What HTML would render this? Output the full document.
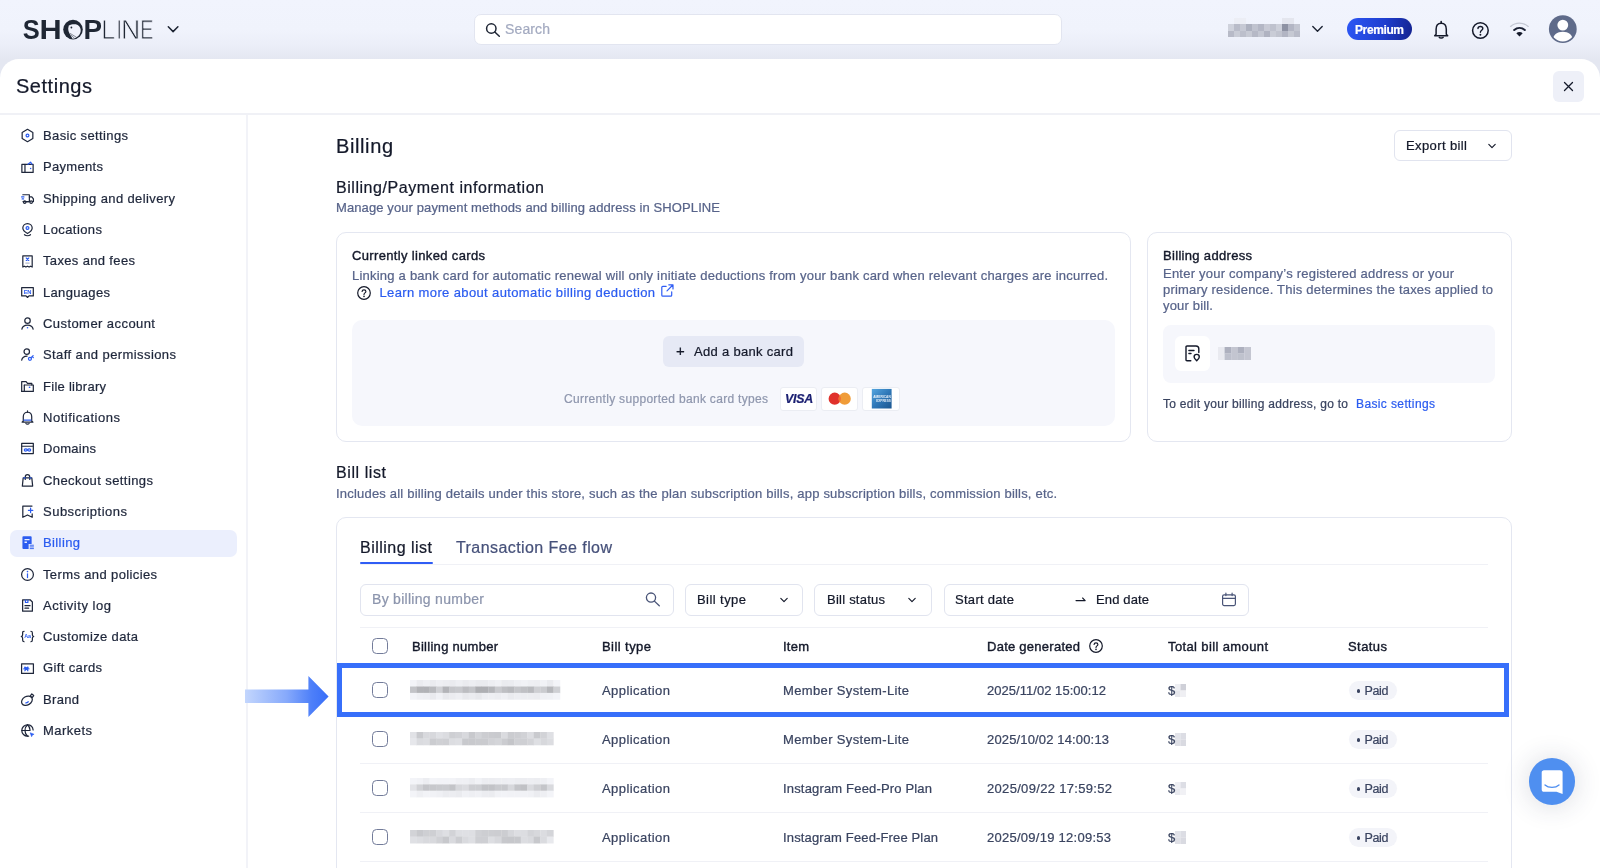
<!DOCTYPE html>
<html lang="en">
<head>
<meta charset="utf-8">
<title>Settings - Billing</title>
<style>
html,body{margin:0;padding:0;}
body{width:1600px;height:868px;overflow:hidden;font-family:"Liberation Sans",sans-serif;background:#eef0f9;}
#app{position:relative;width:1600px;height:868px;overflow:hidden;background:linear-gradient(180deg,#f1f4fd 0px,#f0f3fc 30px,#ebeef8 46px,#e4e7f1 59px);}
#tx{position:absolute;left:0;top:0;width:1600px;height:868px;will-change:transform;}
.t{position:absolute;white-space:pre;-webkit-text-stroke-width:0.22px;}
.b{position:absolute;box-sizing:border-box;}
svg{position:absolute;overflow:visible;}
.ic{fill:none;stroke:#1f273b;stroke-width:1.3;stroke-linecap:round;stroke-linejoin:round;}
.bl{stroke:#2b5cf0;}
.card{border:1px solid #e4e7f1;border-radius:10px;background:#fff;}
.inp{border:1px solid #e1e4ef;border-radius:6px;background:#fff;}
.cb{width:16px;height:16px;border:1.3px solid #737c9a;border-radius:4.500px;background:#fff;}
.pill{background:#f3f4f9;border-radius:10px;}
.hl{height:1px;background:#f0f1f6;}
.px{position:absolute;}
</style>
</head>
<body>
<div id="app">
<div id="tx">
<!-- header -->
<div class="b" style="left:474px;top:13.500px;width:588px;height:31.200px;border:1px solid #e2e5f0;border-radius:7px;background:#fff;"></div>
<div class="b" style="left:1347px;top:18px;width:65px;height:22px;border-radius:11px;background:linear-gradient(100deg,#2d57f5 0%,#1f3fd0 55%,#14238f 100%);"></div>

<!-- settings panel -->
<div class="b" style="left:0;top:58.500px;width:1600px;height:830px;background:#fff;border-radius:19px 19px 0 0;"></div>
<div class="b" style="left:1553px;top:71px;width:31px;height:31px;border-radius:6px;background:#eef0f8;"></div>
<div class="b" style="left:0;top:113.200px;width:1600px;height:1.600px;background:#f0f1f6;"></div>
<div class="b" style="left:246px;top:115px;width:2px;height:760px;background:#f2f3f8;"></div>

<!-- sidebar active -->
<div class="b" style="left:10px;top:529.500px;width:227px;height:27.300px;border-radius:7px;background:#ebeffd;"></div>

<!-- export -->
<div class="b inp" style="left:1394px;top:130px;width:118px;height:31px;"></div>

<!-- card 1 -->
<div class="b card" style="left:336px;top:232px;width:795px;height:210px;"></div>
<div class="b" style="left:352px;top:320px;width:763px;height:106px;border-radius:10px;background:#f6f7fc;"></div>
<div class="b" style="left:662.600px;top:336px;width:141.400px;height:31px;border-radius:6px;background:#e6e9f5;"></div>
<div class="b" style="left:779.700px;top:387.200px;width:37.600px;height:23.400px;border-radius:3px;border:1px solid #ebedf3;background:#fff;"></div>
<div class="b" style="left:821.300px;top:387.200px;width:36.600px;height:23.400px;border-radius:3px;border:1px solid #ebedf3;background:#fff;"></div>
<div class="b" style="left:862.200px;top:387.200px;width:37.500px;height:23.400px;border-radius:3px;border:1px solid #ebedf3;background:#fff;"></div>

<!-- card 2 -->
<div class="b card" style="left:1146.500px;top:232px;width:365.500px;height:210px;"></div>
<div class="b" style="left:1163px;top:324.600px;width:332px;height:58.400px;border-radius:8px;background:#f6f7fc;"></div>
<div class="b" style="left:1175px;top:336px;width:35px;height:35px;border-radius:6px;background:#fff;"></div>

<!-- card 3 -->
<div class="b card" style="left:336px;top:517px;width:1176px;height:380px;"></div>
<div class="b hl" style="left:360px;top:564px;width:1128px;"></div>
<div class="b" style="left:360px;top:562px;width:73px;height:2.400px;background:#2f5df5;border-radius:1px;"></div>
<div class="b inp" style="left:360px;top:584px;width:314px;height:32px;"></div>
<div class="b inp" style="left:685px;top:584px;width:118px;height:32px;"></div>
<div class="b inp" style="left:814px;top:584px;width:118px;height:32px;"></div>
<div class="b inp" style="left:944px;top:584px;width:305px;height:32px;"></div>
<div class="b hl" style="left:360px;top:627px;width:1128px;"></div>
<div class="b hl" style="left:360px;top:763.300px;width:1128px;"></div>
<div class="b hl" style="left:360px;top:812.400px;width:1128px;"></div>
<div class="b hl" style="left:360px;top:861.400px;width:1128px;"></div>

<!-- checkboxes -->
<div class="b cb" style="left:372px;top:638px;"></div>
<div class="b cb" style="left:372px;top:682px;"></div>
<div class="b cb" style="left:372px;top:731px;"></div>
<div class="b cb" style="left:372px;top:780px;"></div>
<div class="b cb" style="left:372px;top:829px;"></div>

<!-- paid pills -->
<div class="b pill" style="left:1348.500px;top:680.6px;width:48.500px;height:19.600px;"></div>
<div class="b pill" style="left:1348.500px;top:729.6px;width:48.500px;height:19.600px;"></div>
<div class="b pill" style="left:1348.500px;top:778.6px;width:48.500px;height:19.600px;"></div>
<div class="b pill" style="left:1348.500px;top:827.6px;width:48.500px;height:19.600px;"></div>

<!-- highlight frame + arrow -->
<div class="b" style="left:336.700px;top:663px;width:1172.800px;height:54px;border:5px solid #376ffa;"></div>
<svg style="left:245px;top:676px;" width="84" height="42" viewBox="0 0 84 42">
<defs><linearGradient id="ag" x1="0" x2="1" y1="0" y2="0"><stop offset="0" stop-color="#c3d6fd"/><stop offset="0.5" stop-color="#86a9fb"/><stop offset="0.8" stop-color="#4d7ff9"/><stop offset="1" stop-color="#386ef8"/></linearGradient></defs>
<path d="M0 13.600H63.400V0.100L83.600 20.600L63.400 41V27.100H0Z" fill="url(#ag)"/>
</svg>

<!-- chat -->
<div class="b" style="left:1528.600px;top:758.200px;width:46.800px;height:46.800px;border-radius:24px;background:#4f8ff0;box-shadow:0 1px 26px 2px rgba(40,50,80,0.15);"></div>
<!-- logo -->
<svg style="left:0;top:0;" width="200" height="58" viewBox="0 0 200 58" font-family="'Liberation Sans',sans-serif" font-size="26.5" fill="#1f2734">
<g font-weight="700">
<text transform="translate(22.63,39.2) scale(0.962,1.075)">S</text>
<text transform="translate(39.41,39.2) scale(1.16,1.075)">H</text>
<text transform="translate(83.41,39.2) scale(1.048,1.075)">P</text>
</g>
<g stroke="#f0f2fb" stroke-width="0.75">
<text transform="translate(101.23,39.2) scale(0.94,1.075)">L</text>
<text transform="translate(116.4,39.2) scale(0.72,1.075)">I</text>
<text transform="translate(121.09,39.2) scale(1.007,1.075)">N</text>
<text transform="translate(140.25,39.2) scale(0.748,1.075)">E</text>
</g>
<circle cx="73" cy="29.600" r="9.800"/>
<path d="M68.800 25.600C71 24.300 73.500 23.900 75.800 24.300C78.600 25.200 80.500 27.200 80.700 29.800C80.900 32.200 80 34.200 78.500 35.800C77 37.400 75 38.500 72.600 38.800L70.200 34.800C69 33 68.200 30.800 68.200 28.600Z" fill="#f0f2fb"/>
<circle cx="71.400" cy="27.500" r="0.900"/>
<path d="M69.800 33.200L76.500 37.300M70.600 34.800L74.500 38.200" stroke="#1f2734" stroke-width="0.5" fill="none"/>
</svg>
<svg style="left:166.500px;top:24px;" width="12" height="10" viewBox="0 0 12 10"><path d="M1.300 2.800L6.100 7.600L10.900 2.800" fill="none" stroke="#1d2433" stroke-width="1.500" stroke-linecap="round" stroke-linejoin="round"/></svg>
<!-- search icon -->
<svg style="left:484px;top:21px;" width="18" height="18" viewBox="0 0 18 18"><circle cx="7.300" cy="7.500" r="4.700" fill="none" stroke="#1d2433" stroke-width="1.500"/><path d="M10.800 11L15.300 15.300" stroke="#1d2433" stroke-width="1.500" stroke-linecap="round"/></svg>
<!-- blurred shop name -->
<svg style="left:1228px;top:18px;" width="72" height="20" viewBox="0 0 72 20">
<rect x="0" y="6" width="72" height="13" fill="#c4c7d2"/>
<rect x="6" y="0" width="12" height="6" fill="#eceef5"/><rect x="54" y="0" width="12" height="6" fill="#e4e6ee"/>
<rect x="0" y="6" width="6" height="7" fill="#cfd2dc"/><rect x="6" y="6" width="6" height="7" fill="#b9bcc9"/><rect x="12" y="6" width="6" height="7" fill="#c6c9d4"/><rect x="18" y="6" width="6" height="7" fill="#adb1bf"/><rect x="24" y="6" width="6" height="7" fill="#c0c3cf"/><rect x="30" y="6" width="6" height="7" fill="#b4b7c5"/><rect x="36" y="6" width="6" height="7" fill="#c8cad5"/><rect x="42" y="6" width="6" height="7" fill="#bfc2ce"/><rect x="48" y="6" width="6" height="7" fill="#cdd0da"/><rect x="54" y="6" width="6" height="7" fill="#8e92a3"/><rect x="60" y="6" width="6" height="7" fill="#b3b6c4"/><rect x="66" y="6" width="6" height="7" fill="#c3c6d1"/>
<rect x="0" y="13" width="6" height="6" fill="#b7bac7"/><rect x="6" y="13" width="6" height="6" fill="#c9ccd6"/><rect x="12" y="13" width="6" height="6" fill="#bcbfcb"/><rect x="18" y="13" width="6" height="6" fill="#c7cad4"/><rect x="24" y="13" width="6" height="6" fill="#b6b9c6"/><rect x="30" y="13" width="6" height="6" fill="#c4c7d2"/><rect x="36" y="13" width="6" height="6" fill="#b0b3c1"/><rect x="42" y="13" width="6" height="6" fill="#c9ccd6"/><rect x="48" y="13" width="6" height="6" fill="#c1c4cf"/><rect x="54" y="13" width="6" height="6" fill="#b2b5c3"/><rect x="60" y="13" width="6" height="6" fill="#c6c9d3"/><rect x="66" y="13" width="6" height="6" fill="#b9bcc9"/>
</svg>
<svg style="left:1311px;top:24px;" width="13" height="10" viewBox="0 0 13 10"><path d="M1.800 2.500L6.500 7.200L11.200 2.500" fill="none" stroke="#1d2433" stroke-width="1.400" stroke-linecap="round" stroke-linejoin="round"/></svg>
<!-- bell -->
<svg style="left:1432px;top:20px;" width="18" height="20" viewBox="0 0 18 20"><path d="M4.100 14.300V9.200C4.100 5.700 6 3.200 9.200 3.200S14.300 5.700 14.300 9.200V14.300L15.700 15.700H2.700Z" fill="none" stroke="#14192a" stroke-width="1.500" stroke-linejoin="round"/><path d="M7.300 17.300C7.800 18.300 10.600 18.300 11.100 17.300" fill="none" stroke="#14192a" stroke-width="1.500" stroke-linecap="round"/><path d="M9.200 1.600V3" stroke="#14192a" stroke-width="1.600" stroke-linecap="round"/></svg>
<!-- help -->
<svg style="left:1471px;top:21px;" width="19" height="19" viewBox="0 0 19 19"><circle cx="9.400" cy="9.500" r="7.800" fill="none" stroke="#14192a" stroke-width="1.500"/><path d="M7 7.600C7 4.800 11.800 4.800 11.800 7.600C11.800 9.300 9.400 9.300 9.400 11.300" fill="none" stroke="#14192a" stroke-width="1.400" stroke-linecap="round"/><circle cx="9.400" cy="13.700" r="0.950" fill="#14192a"/></svg>
<!-- wifi -->
<svg style="left:1509px;top:21px;" width="21" height="17" viewBox="0 0 21 17"><path d="M1.600 5.400C6.600 0.900 14.200 0.900 19.200 5.400" fill="none" stroke="#c3c7d3" stroke-width="1.300" stroke-linecap="round"/><path d="M5.200 9C8.300 6.200 12.700 6.200 15.800 9" fill="none" stroke="#1a2033" stroke-width="2" stroke-linecap="round"/><path d="M7.300 12.200C9.200 10.700 11.800 10.700 13.700 12.200L10.500 15.600Z" fill="#14192a"/></svg>
<!-- avatar -->
<svg style="left:1548px;top:15px;" width="30" height="29" viewBox="0 0 30 29"><defs><clipPath id="avc"><circle cx="14.800" cy="14.100" r="12.300"/></clipPath></defs><circle cx="14.800" cy="14.100" r="13.900" fill="#5f6b8a"/><g clip-path="url(#avc)"><circle cx="14.800" cy="10.100" r="5.400" fill="#fff"/><path d="M4.400 27C4.400 19.500 9.500 16.700 14.800 16.700S25.200 19.500 25.200 27Z" fill="#fff"/></g></svg>
<!-- close x -->
<svg style="left:1563px;top:81px;" width="11" height="11" viewBox="0 0 11 11"><path d="M1.500 1.500L9.500 9.500M9.500 1.500L1.500 9.500" stroke="#14192a" stroke-width="1.300" stroke-linecap="round"/></svg>
<!-- sidebar icons -->
<svg style="left:20.200px;top:128.2px;" width="15" height="15" viewBox="0 0 16 16"><path class="ic" d="M8 1.400L13.700 4.700V11.300L8 14.600L2.300 11.300V4.700Z"/><circle cx="8" cy="8" r="1.500" class="ic bl" stroke-width="1.200"/></svg>
<svg style="left:20.200px;top:159.5px;" width="15" height="15" viewBox="0 0 16 16"><path class="ic" d="M2 4.700H14V13.300H2Z"/><path class="ic" d="M5.300 4.700V13.300"/><path class="ic bl" d="M8.500 4.500L11.300 2.300L12.700 4.500" stroke-width="1.100"/><circle cx="11.300" cy="9" r="0.800" fill="#2b5cf0"/></svg>
<svg style="left:20.200px;top:190.8px;" width="15" height="15" viewBox="0 0 16 16"><path class="ic" d="M3 4H10V11.300H3.200"/><path class="ic" d="M10 6.300H12.600L14.300 8.500V11.300H13.400"/><path class="ic" d="M6.600 11.300H10.300"/><circle class="ic" cx="5" cy="11.900" r="1.300"/><circle class="ic" cx="11.900" cy="11.900" r="1.300"/><path class="ic bl" d="M1.700 6.300H4.200M2.300 8.500H3.800" stroke-width="1.100"/></svg>
<svg style="left:20.200px;top:222.2px;" width="15" height="15" viewBox="0 0 16 16"><path class="ic" d="M8 1.700C10.900 1.700 13 3.900 13 6.500C13 9 10.800 10.800 8 12.300C5.200 10.800 3 9 3 6.500C3 3.900 5.100 1.700 8 1.700Z"/><circle class="ic bl" cx="8" cy="6.400" r="1.500" stroke-width="1.200"/><path class="ic" d="M4.800 13.600C6.500 15 9.500 15 11.200 13.600"/></svg>
<svg style="left:20.200px;top:253.5px;" width="15" height="15" viewBox="0 0 16 16"><path class="ic" d="M3 2H13V13.900L11.300 13L9.700 13.900L8 13L6.300 13.900L4.700 13L3 13.900Z"/><path class="ic bl" d="M6.700 4.300L9.300 6.900M9.300 4.300L6.700 6.900" stroke-width="1"/><path d="M5.800 9.700H10.200" stroke="#9aa3bd" stroke-width="1" fill="none"/></svg>
<svg style="left:20.200px;top:284.8px;" width="15" height="15" viewBox="0 0 16 16"><path class="ic" d="M1.800 2.700H14.200V11.600H9.600L8 13.300L6.400 11.600H1.800Z"/><text x="8" y="9.600" text-anchor="middle" font-family="'Liberation Sans',sans-serif" font-size="6.200" font-weight="700" fill="#2b5cf0" letter-spacing="-0.2">EN</text></svg>
<svg style="left:20.200px;top:316.1px;" width="15" height="15" viewBox="0 0 16 16"><circle class="ic" cx="8" cy="5" r="2.900"/><path class="ic" d="M2 14C2.600 10.800 5 9.700 8 9.700S13.400 10.800 14 14"/><circle cx="8" cy="12.600" r="0.850" fill="#2b5cf0"/></svg>
<svg style="left:20.200px;top:347.4px;" width="15" height="15" viewBox="0 0 16 16"><circle class="ic" cx="7.200" cy="5" r="2.900"/><path class="ic" d="M1.800 14C2.400 10.800 4.600 9.700 7.600 9.700"/><circle class="ic bl" cx="10.600" cy="12.600" r="1.600" stroke-width="1.200"/><path class="ic bl" d="M11.800 11.400L14 9.200M13 10.200L14.200 11.300" stroke-width="1.200"/></svg>
<svg style="left:20.200px;top:378.8px;" width="15" height="15" viewBox="0 0 16 16"><path class="ic" d="M1.800 13.200V2.800H6.500L8 4.700H12.600V6.300"/><path class="ic" d="M4.600 6.400H14.200V13.200H1.800"/><path class="ic" d="M4.600 6.400V13.200"/><circle cx="10.200" cy="8.800" r="0.900" fill="#2b5cf0"/></svg>
<svg style="left:20.200px;top:410.1px;" width="15" height="15" viewBox="0 0 16 16"><path class="ic" d="M3.500 11.700V7.300C3.500 4.300 5.400 2.400 8 2.400S12.500 4.300 12.500 7.300V11.700L13.800 12.900H2.200Z"/><path class="ic" d="M8 1V2.300"/><path class="ic" d="M6.300 14.400C6.900 15.400 9.100 15.400 9.700 14.400"/><path class="ic bl" d="M4.300 10.700H11.700" stroke-width="1.300"/></svg>
<svg style="left:20.200px;top:441.4px;" width="15" height="15" viewBox="0 0 16 16"><path class="ic" d="M1.800 2.500H14.200V13.400H1.800Z"/><path class="ic" d="M1.800 5.600H14.200"/><path class="ic bl" d="M8 9.500C7 8 4.600 8.200 4.600 9.600S7 11.200 8 9.500C9 8 11.400 8.200 11.400 9.600S9 11.200 8 9.500Z" stroke-width="1"/></svg>
<svg style="left:20.200px;top:472.7px;" width="15" height="15" viewBox="0 0 16 16"><path class="ic" d="M3.400 5.200H12.600L13.500 14H2.500Z"/><path class="ic" d="M5.600 6.800V4.200C5.600 2.700 6.600 1.700 8 1.700S10.400 2.700 10.400 4.200V6.800"/><path class="ic bl" d="M4.300 5.200H5.500M10.500 5.200H11.700" stroke-width="1.200"/></svg>
<svg style="left:20.200px;top:504.0px;" width="15" height="15" viewBox="0 0 16 16"><path class="ic" d="M12.800 2.200H3V14.200L8 11.700L13 14.200V10.600"/><path class="ic bl" d="M11.300 4.500V9.100M9 6.800H13.600" stroke-width="1.300"/></svg>
<svg style="left:20.200px;top:535.4px;" width="15" height="15" viewBox="0 0 16 16"><path d="M2.600 2.200C2.600 1.600 3 1.200 3.600 1.200H11.400C12 1.200 12.400 1.600 12.400 2.200V9.600H9.200V14.800H3.600C3 14.800 2.600 14.400 2.600 13.800Z" fill="#2b5cf0"/><path d="M4.800 4.200H10.200V5.600H4.800ZM4.800 7H7.400V8.400H4.800Z" fill="#ebeffd"/><path d="M10.400 10.900H14.800M10.400 12.700H14.800M10.400 14.500H14.800" stroke="#2b5cf0" stroke-width="0.950" fill="none"/></svg>
<svg style="left:20.200px;top:566.7px;" width="15" height="15" viewBox="0 0 16 16"><circle class="ic" cx="8" cy="8" r="6.300"/><path class="ic bl" d="M8 7.300V11.300" stroke-width="1.300"/><circle cx="8" cy="4.900" r="0.850" fill="#2b5cf0"/></svg>
<svg style="left:20.200px;top:598.0px;" width="15" height="15" viewBox="0 0 16 16"><path class="ic" d="M2.800 1.900H10.800L13.200 4.300V14.100H2.800Z" stroke-width="1.400"/><path class="ic" d="M5.300 8.200H10.700M5.300 10.900H9.200"/><path class="ic bl" d="M5.800 2.200V4.800H8.400V2.200" stroke-width="1.200"/></svg>
<svg style="left:20.200px;top:629.3px;" width="15" height="15" viewBox="0 0 16 16"><path class="ic" d="M4.400 2.400C3 2.400 2.800 3.100 2.800 4.200V6.200C2.800 7.200 2.300 7.700 1.400 8C2.300 8.300 2.800 8.800 2.800 9.800V11.800C2.800 12.900 3 13.600 4.400 13.600"/><path class="ic" d="M11.600 2.400C13 2.400 13.200 3.100 13.200 4.200V6.200C13.200 7.200 13.700 7.700 14.600 8C13.700 8.300 13.200 8.800 13.200 9.800V11.800C13.200 12.900 13 13.600 11.600 13.600"/><text x="8" y="9.700" text-anchor="middle" font-family="'Liberation Sans',sans-serif" font-size="5.800" font-weight="700" fill="#2b5cf0" letter-spacing="-0.3">Aa</text></svg>
<svg style="left:20.200px;top:660.6px;" width="15" height="15" viewBox="0 0 16 16"><path class="ic" d="M1.700 3H14.300V13.200H1.700Z" stroke-width="1.400"/><path class="ic bl" d="M6.800 7.600C5.400 5.400 3.600 7.400 6.800 7.600C10 7.400 8.200 5.400 6.800 7.600ZM5.200 10.400L6.800 7.800L8.400 10.400M4 8.300H9.600" stroke-width="0.750"/></svg>
<svg style="left:20.200px;top:692.0px;" width="15" height="15" viewBox="0 0 16 16"><ellipse class="ic" cx="7.400" cy="9.300" rx="6.100" ry="4.500" transform="rotate(-30 7.400 9.300)"/><path class="ic" d="M12.600 2L14.600 3.800L13 6L11 4.200Z"/><path class="ic bl" d="M6.200 11.600C7.200 11.600 8.200 11.100 8.800 10.400" stroke-width="1.100"/></svg>
<svg style="left:20.200px;top:723.3px;" width="15" height="15" viewBox="0 0 16 16"><path class="ic" d="M14 7.400C13.700 4.200 11.200 1.900 8 1.900C4.600 1.900 1.900 4.600 1.900 8S4.600 14.100 8 14.100C8.400 14.100 8.800 14.100 9.200 14"/><path class="ic" d="M8 1.900C5.800 3.800 5.300 5.800 5.300 8S5.800 12.200 8 14.100"/><path class="ic" d="M8 1.900C9.900 3.600 10.600 5.500 10.700 7.400"/><path class="ic" d="M2 8H10.600"/><path d="M10.800 10.400L15 12L13.200 12.800L12.400 14.600Z" fill="#2b5cf0" stroke="#2b5cf0" stroke-width="0.600" stroke-linejoin="round"/></svg>
<!-- main icons -->
<svg style="left:1486px;top:140.8px;" width="12" height="10" viewBox="0 0 12 10"><path d="M2.8 3.4L6 6.6L9.2 3.4" fill="none" stroke="#14192a" stroke-width="1.15" stroke-linecap="round" stroke-linejoin="round"/></svg>
<svg style="left:355.8px;top:285.2px;" width="16" height="16" viewBox="0 0 16 16"><circle cx="8" cy="8" r="6.3" fill="none" stroke="#14192a" stroke-width="1.200"/><path d="M6.100 6.500C6.100 4.300 9.900 4.300 9.900 6.500C9.900 7.900 8 7.900 8 9.400" fill="none" stroke="#14192a" stroke-width="1.150" stroke-linecap="round"/><circle cx="8" cy="11.400" r="0.800" fill="#14192a"/></svg>
<svg style="left:660px;top:283px;" width="14" height="15" viewBox="0 0 14 15"><path d="M6.200 3.300H2.800C2.200 3.300 1.800 3.700 1.800 4.300V12.200C1.800 12.800 2.200 13.200 2.800 13.200H10.700C11.300 13.200 11.700 12.800 11.700 12.200V8.800" fill="none" stroke="#2f5df5" stroke-width="1.200" stroke-linecap="round"/><path d="M8.800 1.800H13V6M12.800 2L7 7.800" fill="none" stroke="#2f5df5" stroke-width="1.200" stroke-linecap="round" stroke-linejoin="round"/></svg>
<span class="t" style="left:784.500px;top:389.500px;font-size:12px;line-height:18px;font-weight:700;font-style:italic;color:#1a1f71;letter-spacing:-0.2px;transform:scaleX(1.03);transform-origin:0 0;">VISA</span>
<svg style="left:821px;top:387px;" width="37" height="24" viewBox="0 0 37 24"><circle cx="13.700" cy="11.700" r="6.100" fill="#e0312b"/><circle cx="23.700" cy="11.700" r="6.100" fill="#f09c38"/><path d="M18.700 8.200A6.100 6.100 0 0 1 18.700 15.200A6.100 6.100 0 0 1 18.700 8.200Z" fill="#f26b35"/></svg>
<svg style="left:862px;top:387px;" width="37" height="24" viewBox="0 0 37 24"><defs><linearGradient id="ax" x1="0" y1="0" x2="1" y2="1"><stop offset="0" stop-color="#55a6e0"/><stop offset="0.5" stop-color="#2f78b8"/><stop offset="1" stop-color="#1b568f"/></linearGradient></defs><rect x="9.800" y="1.900" width="19.800" height="19.600" fill="url(#ax)"/><text x="20" y="11.300" text-anchor="middle" font-family="'Liberation Sans',sans-serif" font-size="3.500" font-weight="700" fill="#e8f1fa" textLength="17.500" lengthAdjust="spacingAndGlyphs">AMERICAN</text><text x="21.500" y="15.300" text-anchor="middle" font-family="'Liberation Sans',sans-serif" font-size="3.500" font-weight="700" fill="#e8f1fa" textLength="14.500" lengthAdjust="spacingAndGlyphs">EXPRESS</text></svg>
<svg style="left:1184px;top:344px;" width="18" height="19" viewBox="0 0 18 19"><path d="M6.800 16.800H3C2.400 16.800 2 16.400 2 15.800V3C2 2.400 2.400 2 3 2H12C13.700 2 14.800 3.300 14.800 4.800V8.600" fill="none" stroke="#14192a" stroke-width="1.400" stroke-linecap="round"/><path d="M4.900 6.500H10M4.900 9.500H7" stroke="#14192a" stroke-width="1.400" stroke-linecap="round" fill="none"/><path d="M12.700 10.400C14.200 10.400 15.300 11.500 15.300 12.900C15.300 14.300 13.900 15.600 12.700 16.800C11.500 15.600 10.100 14.300 10.100 12.900C10.100 11.500 11.200 10.400 12.700 10.400Z" fill="#fff" stroke="#14192a" stroke-width="1.400" stroke-linejoin="round"/></svg>
<svg style="left:644px;top:591px;" width="18" height="18" viewBox="0 0 18 18"><circle cx="7" cy="6.600" r="4.600" fill="none" stroke="#4a5578" stroke-width="1.300"/><path d="M10.400 10.100L15.300 14.800" stroke="#4a5578" stroke-width="1.300" stroke-linecap="round"/></svg>
<svg style="left:777.6px;top:594.9px;" width="12" height="10" viewBox="0 0 12 10"><path d="M2.8 3.4L6 6.6L9.2 3.4" fill="none" stroke="#14192a" stroke-width="1.15" stroke-linecap="round" stroke-linejoin="round"/></svg>
<svg style="left:906.4px;top:594.9px;" width="12" height="10" viewBox="0 0 12 10"><path d="M2.8 3.4L6 6.6L9.2 3.4" fill="none" stroke="#14192a" stroke-width="1.15" stroke-linecap="round" stroke-linejoin="round"/></svg>
<svg style="left:1075px;top:594.6px;" width="12" height="10" viewBox="0 0 12 10"><path d="M1 5.600H10.200L7.600 3" fill="none" stroke="#14192a" stroke-width="1.100" stroke-linecap="round" stroke-linejoin="round"/></svg>
<svg style="left:1221px;top:592px;" width="16" height="15" viewBox="0 0 16 15"><rect x="1.600" y="2.800" width="12.800" height="10.800" rx="1.500" fill="none" stroke="#4a5578" stroke-width="1.200"/><path d="M1.600 6.300H14.400M4.900 1.200V3.600M11.100 1.200V3.600" stroke="#4a5578" stroke-width="1.200" stroke-linecap="round" fill="none"/></svg>
<svg style="left:1088.3px;top:638.3px;" width="16" height="16" viewBox="0 0 16 16"><circle cx="8" cy="8" r="6.3" fill="none" stroke="#14192a" stroke-width="1.200"/><path d="M6.100 6.500C6.100 4.300 9.900 4.300 9.900 6.500C9.900 7.900 8 7.900 8 9.400" fill="none" stroke="#14192a" stroke-width="1.150" stroke-linecap="round"/><circle cx="8" cy="11.400" r="0.800" fill="#14192a"/></svg>
<div class="b" style="left:1356.500px;top:689.1px;width:3.500px;height:3.500px;border-radius:2px;background:#3a4460;"></div>
<div class="b" style="left:1356.500px;top:738.1px;width:3.500px;height:3.500px;border-radius:2px;background:#3a4460;"></div>
<div class="b" style="left:1356.500px;top:787.1px;width:3.500px;height:3.500px;border-radius:2px;background:#3a4460;"></div>
<div class="b" style="left:1356.500px;top:836.1px;width:3.500px;height:3.500px;border-radius:2px;background:#3a4460;"></div>
<svg style="left:1540px;top:768.7px;" width="24" height="27" viewBox="0 0 24 27"><path d="M4 1.300H20.300C21.700 1.300 22.600 2.200 22.600 3.600V25L16.500 22.800H4C2.600 22.800 1.700 21.900 1.700 20.500V3.600C1.700 2.200 2.600 1.300 4 1.300Z" fill="#fff"/><path d="M5 16C8.500 19.300 15.500 19.300 19 16" fill="none" stroke="#4f8ff0" stroke-width="1.300" stroke-linecap="round"/></svg>
<svg style="left:410px;top:680px;" width="150" height="19.4" viewBox="0 0 150 19.4"><rect x="0.0" y="0.0" width="6.8" height="6.8" fill="#f3f4f8"/><rect x="6.5" y="0.0" width="6.8" height="6.8" fill="#ebecf0"/><rect x="13.0" y="0.0" width="6.8" height="6.8" fill="#eff0f4"/><rect x="19.6" y="0.0" width="6.8" height="6.8" fill="#eaebef"/><rect x="26.1" y="0.0" width="6.8" height="6.8" fill="#eeeff3"/><rect x="32.6" y="0.0" width="6.8" height="6.8" fill="#ecedf1"/><rect x="39.1" y="0.0" width="6.8" height="6.8" fill="#eaebef"/><rect x="45.7" y="0.0" width="6.8" height="6.8" fill="#eeeff3"/><rect x="52.2" y="0.0" width="6.8" height="6.8" fill="#eaebef"/><rect x="58.7" y="0.0" width="6.8" height="6.8" fill="#edeef2"/><rect x="65.2" y="0.0" width="6.8" height="6.8" fill="#eaebef"/><rect x="71.7" y="0.0" width="6.8" height="6.8" fill="#eaebef"/><rect x="78.3" y="0.0" width="6.8" height="6.8" fill="#edeef2"/><rect x="84.8" y="0.0" width="6.8" height="6.8" fill="#f0f1f5"/><rect x="91.3" y="0.0" width="6.8" height="6.8" fill="#eaebef"/><rect x="97.8" y="0.0" width="6.8" height="6.8" fill="#ebecf0"/><rect x="104.3" y="0.0" width="6.8" height="6.8" fill="#eff0f4"/><rect x="110.9" y="0.0" width="6.8" height="6.8" fill="#f1f2f6"/><rect x="117.4" y="0.0" width="6.8" height="6.8" fill="#eeeff3"/><rect x="123.9" y="0.0" width="6.8" height="6.8" fill="#edeef2"/><rect x="130.4" y="0.0" width="6.8" height="6.8" fill="#f1f2f6"/><rect x="137.0" y="0.0" width="6.8" height="6.8" fill="#eaebef"/><rect x="143.5" y="0.0" width="6.8" height="6.8" fill="#f3f4f8"/><rect x="0.0" y="6.5" width="6.8" height="6.8" fill="#c2c3c7"/><rect x="6.5" y="6.5" width="6.8" height="6.8" fill="#b2b3b7"/><rect x="13.0" y="6.5" width="6.8" height="6.8" fill="#b1b2b6"/><rect x="19.6" y="6.5" width="6.8" height="6.8" fill="#b9babe"/><rect x="26.1" y="6.5" width="6.8" height="6.8" fill="#cfd0d4"/><rect x="32.6" y="6.5" width="6.8" height="6.8" fill="#b3b4b8"/><rect x="39.1" y="6.5" width="6.8" height="6.8" fill="#c5c6ca"/><rect x="45.7" y="6.5" width="6.8" height="6.8" fill="#c8c9cd"/><rect x="52.2" y="6.5" width="6.8" height="6.8" fill="#bcbdc1"/><rect x="58.7" y="6.5" width="6.8" height="6.8" fill="#c4c5c9"/><rect x="65.2" y="6.5" width="6.8" height="6.8" fill="#aeafb3"/><rect x="71.7" y="6.5" width="6.8" height="6.8" fill="#aeafb3"/><rect x="78.3" y="6.5" width="6.8" height="6.8" fill="#b5b6ba"/><rect x="84.8" y="6.5" width="6.8" height="6.8" fill="#c9cace"/><rect x="91.3" y="6.5" width="6.8" height="6.8" fill="#bebfc3"/><rect x="97.8" y="6.5" width="6.8" height="6.8" fill="#b9babe"/><rect x="104.3" y="6.5" width="6.8" height="6.8" fill="#c5c6ca"/><rect x="110.9" y="6.5" width="6.8" height="6.8" fill="#bfc0c4"/><rect x="117.4" y="6.5" width="6.8" height="6.8" fill="#b9babe"/><rect x="123.9" y="6.5" width="6.8" height="6.8" fill="#cecfd3"/><rect x="130.4" y="6.5" width="6.8" height="6.8" fill="#cacbcf"/><rect x="137.0" y="6.5" width="6.8" height="6.8" fill="#b6b7bb"/><rect x="143.5" y="6.5" width="6.8" height="6.8" fill="#cfd0d4"/><rect x="0.0" y="12.9" width="6.8" height="6.8" fill="#f3f4f8"/><rect x="6.5" y="12.9" width="6.8" height="6.8" fill="#eff0f4"/><rect x="13.0" y="12.9" width="6.8" height="6.8" fill="#eeeff3"/><rect x="19.6" y="12.9" width="6.8" height="6.8" fill="#e9eaee"/><rect x="26.1" y="12.9" width="6.8" height="6.8" fill="#f0f1f5"/><rect x="32.6" y="12.9" width="6.8" height="6.8" fill="#e8e9ed"/><rect x="39.1" y="12.9" width="6.8" height="6.8" fill="#ebecf0"/><rect x="45.7" y="12.9" width="6.8" height="6.8" fill="#eeeff3"/><rect x="52.2" y="12.9" width="6.8" height="6.8" fill="#e8e9ed"/><rect x="58.7" y="12.9" width="6.8" height="6.8" fill="#ebecf0"/><rect x="65.2" y="12.9" width="6.8" height="6.8" fill="#e7e8ec"/><rect x="71.7" y="12.9" width="6.8" height="6.8" fill="#edeef2"/><rect x="78.3" y="12.9" width="6.8" height="6.8" fill="#eeeff3"/><rect x="84.8" y="12.9" width="6.8" height="6.8" fill="#ecedf1"/><rect x="91.3" y="12.9" width="6.8" height="6.8" fill="#eff0f4"/><rect x="97.8" y="12.9" width="6.8" height="6.8" fill="#eaebef"/><rect x="104.3" y="12.9" width="6.8" height="6.8" fill="#edeef2"/><rect x="110.9" y="12.9" width="6.8" height="6.8" fill="#ecedf1"/><rect x="117.4" y="12.9" width="6.8" height="6.8" fill="#ecedf1"/><rect x="123.9" y="12.9" width="6.8" height="6.8" fill="#ebecf0"/><rect x="130.4" y="12.9" width="6.8" height="6.8" fill="#eff0f4"/><rect x="137.0" y="12.9" width="6.8" height="6.8" fill="#f0f1f5"/><rect x="143.5" y="12.9" width="6.8" height="6.8" fill="#f3f4f8"/></svg>
<svg style="left:410px;top:732.2px;" width="143.4" height="13.1" viewBox="0 0 143.4 13.1"><rect x="0.0" y="0.0" width="6.8" height="6.8" fill="#e1e2e6"/><rect x="6.5" y="0.0" width="6.8" height="6.8" fill="#c9cace"/><rect x="13.0" y="0.0" width="6.8" height="6.8" fill="#d8d9dd"/><rect x="19.6" y="0.0" width="6.8" height="6.8" fill="#d7d8dc"/><rect x="26.1" y="0.0" width="6.8" height="6.8" fill="#dfe0e4"/><rect x="32.6" y="0.0" width="6.8" height="6.8" fill="#dbdce0"/><rect x="39.1" y="0.0" width="6.8" height="6.8" fill="#cecfd3"/><rect x="45.6" y="0.0" width="6.8" height="6.8" fill="#d1d2d6"/><rect x="52.1" y="0.0" width="6.8" height="6.8" fill="#d8d9dd"/><rect x="58.7" y="0.0" width="6.8" height="6.8" fill="#c8c9cd"/><rect x="65.2" y="0.0" width="6.8" height="6.8" fill="#d3d4d8"/><rect x="71.7" y="0.0" width="6.8" height="6.8" fill="#cccdd1"/><rect x="78.2" y="0.0" width="6.8" height="6.8" fill="#cacbcf"/><rect x="84.7" y="0.0" width="6.8" height="6.8" fill="#c9cace"/><rect x="91.3" y="0.0" width="6.8" height="6.8" fill="#dadbdf"/><rect x="97.8" y="0.0" width="6.8" height="6.8" fill="#cbccd0"/><rect x="104.3" y="0.0" width="6.8" height="6.8" fill="#cdced2"/><rect x="110.8" y="0.0" width="6.8" height="6.8" fill="#d1d2d6"/><rect x="117.3" y="0.0" width="6.8" height="6.8" fill="#dcdde1"/><rect x="123.8" y="0.0" width="6.8" height="6.8" fill="#c9cace"/><rect x="130.4" y="0.0" width="6.8" height="6.8" fill="#d2d3d7"/><rect x="136.9" y="0.0" width="6.8" height="6.8" fill="#dfe0e4"/><rect x="0.0" y="6.5" width="6.8" height="6.8" fill="#e6e7eb"/><rect x="6.5" y="6.5" width="6.8" height="6.8" fill="#dadbdf"/><rect x="13.0" y="6.5" width="6.8" height="6.8" fill="#dcdde1"/><rect x="19.6" y="6.5" width="6.8" height="6.8" fill="#cbccd0"/><rect x="26.1" y="6.5" width="6.8" height="6.8" fill="#cfd0d4"/><rect x="32.6" y="6.5" width="6.8" height="6.8" fill="#cecfd3"/><rect x="39.1" y="6.5" width="6.8" height="6.8" fill="#dcdde1"/><rect x="45.6" y="6.5" width="6.8" height="6.8" fill="#dedfe3"/><rect x="52.1" y="6.5" width="6.8" height="6.8" fill="#c8c9cd"/><rect x="58.7" y="6.5" width="6.8" height="6.8" fill="#c8c9cd"/><rect x="65.2" y="6.5" width="6.8" height="6.8" fill="#cacbcf"/><rect x="71.7" y="6.5" width="6.8" height="6.8" fill="#cacbcf"/><rect x="78.2" y="6.5" width="6.8" height="6.8" fill="#d1d2d6"/><rect x="84.7" y="6.5" width="6.8" height="6.8" fill="#d4d5d9"/><rect x="91.3" y="6.5" width="6.8" height="6.8" fill="#cbccd0"/><rect x="97.8" y="6.5" width="6.8" height="6.8" fill="#c4c5c9"/><rect x="104.3" y="6.5" width="6.8" height="6.8" fill="#cfd0d4"/><rect x="110.8" y="6.5" width="6.8" height="6.8" fill="#cecfd3"/><rect x="117.3" y="6.5" width="6.8" height="6.8" fill="#d3d4d8"/><rect x="123.8" y="6.5" width="6.8" height="6.8" fill="#dedfe3"/><rect x="130.4" y="6.5" width="6.8" height="6.8" fill="#d7d8dc"/><rect x="136.9" y="6.5" width="6.8" height="6.8" fill="#dcdde1"/></svg>
<svg style="left:410px;top:778.1px;" width="143.4" height="19.1" viewBox="0 0 143.4 19.1"><rect x="0.0" y="0.0" width="6.8" height="6.7" fill="#f3f4f8"/><rect x="6.5" y="0.0" width="6.8" height="6.7" fill="#f1f2f6"/><rect x="13.0" y="0.0" width="6.8" height="6.7" fill="#ecedf1"/><rect x="19.6" y="0.0" width="6.8" height="6.7" fill="#f3f4f8"/><rect x="26.1" y="0.0" width="6.8" height="6.7" fill="#f2f3f7"/><rect x="32.6" y="0.0" width="6.8" height="6.7" fill="#f2f3f7"/><rect x="39.1" y="0.0" width="6.8" height="6.7" fill="#f2f3f7"/><rect x="45.6" y="0.0" width="6.8" height="6.7" fill="#eff0f4"/><rect x="52.1" y="0.0" width="6.8" height="6.7" fill="#eff0f4"/><rect x="58.7" y="0.0" width="6.8" height="6.7" fill="#ecedf1"/><rect x="65.2" y="0.0" width="6.8" height="6.7" fill="#f1f2f6"/><rect x="71.7" y="0.0" width="6.8" height="6.7" fill="#ecedf1"/><rect x="78.2" y="0.0" width="6.8" height="6.7" fill="#ecedf1"/><rect x="84.7" y="0.0" width="6.8" height="6.7" fill="#edeef2"/><rect x="91.3" y="0.0" width="6.8" height="6.7" fill="#edeef2"/><rect x="97.8" y="0.0" width="6.8" height="6.7" fill="#eeeff3"/><rect x="104.3" y="0.0" width="6.8" height="6.7" fill="#ecedf1"/><rect x="110.8" y="0.0" width="6.8" height="6.7" fill="#ecedf1"/><rect x="117.3" y="0.0" width="6.8" height="6.7" fill="#edeef2"/><rect x="123.8" y="0.0" width="6.8" height="6.7" fill="#ecedf1"/><rect x="130.4" y="0.0" width="6.8" height="6.7" fill="#eeeff3"/><rect x="136.9" y="0.0" width="6.8" height="6.7" fill="#f3f4f8"/><rect x="0.0" y="6.4" width="6.8" height="6.7" fill="#e2e3e7"/><rect x="6.5" y="6.4" width="6.8" height="6.7" fill="#d1d2d6"/><rect x="13.0" y="6.4" width="6.8" height="6.7" fill="#c4c5c9"/><rect x="19.6" y="6.4" width="6.8" height="6.7" fill="#c7c8cc"/><rect x="26.1" y="6.4" width="6.8" height="6.7" fill="#c9cace"/><rect x="32.6" y="6.4" width="6.8" height="6.7" fill="#cacbcf"/><rect x="39.1" y="6.4" width="6.8" height="6.7" fill="#c3c4c8"/><rect x="45.6" y="6.4" width="6.8" height="6.7" fill="#d7d8dc"/><rect x="52.1" y="6.4" width="6.8" height="6.7" fill="#dbdce0"/><rect x="58.7" y="6.4" width="6.8" height="6.7" fill="#cdced2"/><rect x="65.2" y="6.4" width="6.8" height="6.7" fill="#cdced2"/><rect x="71.7" y="6.4" width="6.8" height="6.7" fill="#c2c3c7"/><rect x="78.2" y="6.4" width="6.8" height="6.7" fill="#c2c3c7"/><rect x="84.7" y="6.4" width="6.8" height="6.7" fill="#c9cace"/><rect x="91.3" y="6.4" width="6.8" height="6.7" fill="#c7c8cc"/><rect x="97.8" y="6.4" width="6.8" height="6.7" fill="#d7d8dc"/><rect x="104.3" y="6.4" width="6.8" height="6.7" fill="#c4c5c9"/><rect x="110.8" y="6.4" width="6.8" height="6.7" fill="#c0c1c5"/><rect x="117.3" y="6.4" width="6.8" height="6.7" fill="#dadbdf"/><rect x="123.8" y="6.4" width="6.8" height="6.7" fill="#cecfd3"/><rect x="130.4" y="6.4" width="6.8" height="6.7" fill="#c4c5c9"/><rect x="136.9" y="6.4" width="6.8" height="6.7" fill="#d9dade"/><rect x="0.0" y="12.7" width="6.8" height="6.7" fill="#f3f4f8"/><rect x="6.5" y="12.7" width="6.8" height="6.7" fill="#eeeff3"/><rect x="13.0" y="12.7" width="6.8" height="6.7" fill="#f2f3f7"/><rect x="19.6" y="12.7" width="6.8" height="6.7" fill="#f1f2f6"/><rect x="26.1" y="12.7" width="6.8" height="6.7" fill="#eff0f4"/><rect x="32.6" y="12.7" width="6.8" height="6.7" fill="#ebecf0"/><rect x="39.1" y="12.7" width="6.8" height="6.7" fill="#ecedf1"/><rect x="45.6" y="12.7" width="6.8" height="6.7" fill="#eaebef"/><rect x="52.1" y="12.7" width="6.8" height="6.7" fill="#f0f1f5"/><rect x="58.7" y="12.7" width="6.8" height="6.7" fill="#eeeff3"/><rect x="65.2" y="12.7" width="6.8" height="6.7" fill="#f0f1f5"/><rect x="71.7" y="12.7" width="6.8" height="6.7" fill="#ecedf1"/><rect x="78.2" y="12.7" width="6.8" height="6.7" fill="#ebecf0"/><rect x="84.7" y="12.7" width="6.8" height="6.7" fill="#f1f2f6"/><rect x="91.3" y="12.7" width="6.8" height="6.7" fill="#f2f3f7"/><rect x="97.8" y="12.7" width="6.8" height="6.7" fill="#f1f2f6"/><rect x="104.3" y="12.7" width="6.8" height="6.7" fill="#f1f2f6"/><rect x="110.8" y="12.7" width="6.8" height="6.7" fill="#f1f2f6"/><rect x="117.3" y="12.7" width="6.8" height="6.7" fill="#f0f1f5"/><rect x="123.8" y="12.7" width="6.8" height="6.7" fill="#ebecf0"/><rect x="130.4" y="12.7" width="6.8" height="6.7" fill="#eeeff3"/><rect x="136.9" y="12.7" width="6.8" height="6.7" fill="#f3f4f8"/></svg>
<svg style="left:410px;top:830px;" width="143.4" height="13.2" viewBox="0 0 143.4 13.2"><rect x="0.0" y="0.0" width="6.8" height="6.9" fill="#d2d3d7"/><rect x="6.5" y="0.0" width="6.8" height="6.9" fill="#c8c9cd"/><rect x="13.0" y="0.0" width="6.8" height="6.9" fill="#cecfd3"/><rect x="19.6" y="0.0" width="6.8" height="6.9" fill="#cecfd3"/><rect x="26.1" y="0.0" width="6.8" height="6.9" fill="#d8d9dd"/><rect x="32.6" y="0.0" width="6.8" height="6.9" fill="#dedfe3"/><rect x="39.1" y="0.0" width="6.8" height="6.9" fill="#d2d3d7"/><rect x="45.6" y="0.0" width="6.8" height="6.9" fill="#dedfe3"/><rect x="52.1" y="0.0" width="6.8" height="6.9" fill="#dfe0e4"/><rect x="58.7" y="0.0" width="6.8" height="6.9" fill="#dedfe3"/><rect x="65.2" y="0.0" width="6.8" height="6.9" fill="#d0d1d5"/><rect x="71.7" y="0.0" width="6.8" height="6.9" fill="#cdced2"/><rect x="78.2" y="0.0" width="6.8" height="6.9" fill="#cdced2"/><rect x="84.7" y="0.0" width="6.8" height="6.9" fill="#cccdd1"/><rect x="91.3" y="0.0" width="6.8" height="6.9" fill="#cccdd1"/><rect x="97.8" y="0.0" width="6.8" height="6.9" fill="#d6d7db"/><rect x="104.3" y="0.0" width="6.8" height="6.9" fill="#dddee2"/><rect x="110.8" y="0.0" width="6.8" height="6.9" fill="#dcdde1"/><rect x="117.3" y="0.0" width="6.8" height="6.9" fill="#d3d4d8"/><rect x="123.8" y="0.0" width="6.8" height="6.9" fill="#d7d8dc"/><rect x="130.4" y="0.0" width="6.8" height="6.9" fill="#dbdce0"/><rect x="136.9" y="0.0" width="6.8" height="6.9" fill="#d4d5d9"/><rect x="0.0" y="6.6" width="6.8" height="6.9" fill="#dfe0e4"/><rect x="6.5" y="6.6" width="6.8" height="6.9" fill="#dcdde1"/><rect x="13.0" y="6.6" width="6.8" height="6.9" fill="#d8d9dd"/><rect x="19.6" y="6.6" width="6.8" height="6.9" fill="#d8d9dd"/><rect x="26.1" y="6.6" width="6.8" height="6.9" fill="#d0d1d5"/><rect x="32.6" y="6.6" width="6.8" height="6.9" fill="#c7c8cc"/><rect x="39.1" y="6.6" width="6.8" height="6.9" fill="#d9dade"/><rect x="45.6" y="6.6" width="6.8" height="6.9" fill="#cccdd1"/><rect x="52.1" y="6.6" width="6.8" height="6.9" fill="#d9dade"/><rect x="58.7" y="6.6" width="6.8" height="6.9" fill="#dedfe3"/><rect x="65.2" y="6.6" width="6.8" height="6.9" fill="#cecfd3"/><rect x="71.7" y="6.6" width="6.8" height="6.9" fill="#cecfd3"/><rect x="78.2" y="6.6" width="6.8" height="6.9" fill="#dddee2"/><rect x="84.7" y="6.6" width="6.8" height="6.9" fill="#d7d8dc"/><rect x="91.3" y="6.6" width="6.8" height="6.9" fill="#c7c8cc"/><rect x="97.8" y="6.6" width="6.8" height="6.9" fill="#c6c7cb"/><rect x="104.3" y="6.6" width="6.8" height="6.9" fill="#c7c8cc"/><rect x="110.8" y="6.6" width="6.8" height="6.9" fill="#dcdde1"/><rect x="117.3" y="6.6" width="6.8" height="6.9" fill="#d9dade"/><rect x="123.8" y="6.6" width="6.8" height="6.9" fill="#c7c8cc"/><rect x="130.4" y="6.6" width="6.8" height="6.9" fill="#dadbdf"/><rect x="136.9" y="6.6" width="6.8" height="6.9" fill="#e8e9ed"/></svg>
<svg style="left:1218px;top:347px;" width="33" height="13" viewBox="0 0 33 13"><rect x="0" y="0" width="6.700" height="13" fill="#e9eaf0"/><rect x="6.600" y="0" width="6.700" height="6.600" fill="#adb0be"/><rect x="6.600" y="6.500" width="6.700" height="6.500" fill="#bdc0cc"/><rect x="13.200" y="0" width="6.700" height="13" fill="#c3c5d0"/><rect x="19.800" y="0" width="6.700" height="6.600" fill="#adb0be"/><rect x="19.800" y="6.500" width="6.700" height="6.500" fill="#bfc2cd"/><rect x="26.400" y="0" width="6.600" height="13" fill="#c4c6d1"/></svg>
<svg style="left:1175px;top:683.5px;" width="11" height="13" viewBox="0 0 11 13"><rect x="0" y="0" width="5.600" height="6.600" fill="#eeeff3"/><rect x="5.500" y="0" width="5.500" height="6.600" fill="#cfd0d8"/><rect x="0" y="6.500" width="5.600" height="6.500" fill="#e6e7ec"/><rect x="5.500" y="6.500" width="5.500" height="6.500" fill="#efeff3"/></svg>
<svg style="left:1175px;top:732.5px;" width="11" height="13" viewBox="0 0 11 13"><rect x="0" y="0" width="5.600" height="6.600" fill="#e2e3e9"/><rect x="5.500" y="0" width="5.500" height="6.600" fill="#dcdde4"/><rect x="0" y="6.500" width="5.600" height="6.500" fill="#dfe0e6"/><rect x="5.500" y="6.500" width="5.500" height="6.500" fill="#d9dae1"/></svg>
<svg style="left:1175px;top:781.5px;" width="11" height="13" viewBox="0 0 11 13"><rect x="0" y="0" width="5.600" height="6.600" fill="#eeeff3"/><rect x="5.500" y="0" width="5.500" height="6.600" fill="#dddee5"/><rect x="0" y="6.500" width="5.600" height="6.500" fill="#e9eaef"/><rect x="5.500" y="6.500" width="5.500" height="6.500" fill="#f1f1f5"/></svg>
<svg style="left:1175px;top:830.5px;" width="11" height="13" viewBox="0 0 11 13"><rect x="0" y="0" width="5.600" height="6.600" fill="#e2e3e9"/><rect x="5.500" y="0" width="5.500" height="6.600" fill="#dcdde4"/><rect x="0" y="6.500" width="5.600" height="6.500" fill="#dfe0e6"/><rect x="5.500" y="6.500" width="5.500" height="6.500" fill="#d9dae1"/></svg>

<!-- text -->
<span class="t" style="left:505px;top:19.3px;font-size:14px;line-height:21px;color:#a3aac0;letter-spacing:0.128px;">Search</span>
<span class="t" style="left:1355px;top:21.2px;font-size:12px;line-height:18px;color:#ffffff;font-weight:700;letter-spacing:-0.393px;">Premium</span>
<span class="t" style="left:16px;top:70.9px;font-size:20px;line-height:30px;color:#14192a;letter-spacing:0.533px;">Settings</span>
<span class="t" style="left:43px;top:126.0px;font-size:13px;line-height:20px;color:#1f273b;letter-spacing:0.369px;">Basic settings</span>
<span class="t" style="left:43px;top:157.3px;font-size:13px;line-height:20px;color:#1f273b;letter-spacing:0.312px;">Payments</span>
<span class="t" style="left:43px;top:188.6px;font-size:13px;line-height:20px;color:#1f273b;letter-spacing:0.384px;">Shipping and delivery</span>
<span class="t" style="left:43px;top:220.0px;font-size:13px;line-height:20px;color:#1f273b;letter-spacing:0.418px;">Locations</span>
<span class="t" style="left:43px;top:251.3px;font-size:13px;line-height:20px;color:#1f273b;letter-spacing:0.350px;">Taxes and fees</span>
<span class="t" style="left:43px;top:282.6px;font-size:13px;line-height:20px;color:#1f273b;letter-spacing:0.332px;">Languages</span>
<span class="t" style="left:43px;top:313.9px;font-size:13px;line-height:20px;color:#1f273b;letter-spacing:0.433px;">Customer account</span>
<span class="t" style="left:43px;top:345.2px;font-size:13px;line-height:20px;color:#1f273b;letter-spacing:0.411px;">Staff and permissions</span>
<span class="t" style="left:43px;top:376.6px;font-size:13px;line-height:20px;color:#1f273b;letter-spacing:0.276px;">File library</span>
<span class="t" style="left:43px;top:407.9px;font-size:13px;line-height:20px;color:#1f273b;letter-spacing:0.516px;">Notifications</span>
<span class="t" style="left:43px;top:439.2px;font-size:13px;line-height:20px;color:#1f273b;letter-spacing:0.284px;">Domains</span>
<span class="t" style="left:43px;top:470.5px;font-size:13px;line-height:20px;color:#1f273b;letter-spacing:0.416px;">Checkout settings</span>
<span class="t" style="left:43px;top:501.8px;font-size:13px;line-height:20px;color:#1f273b;letter-spacing:0.496px;">Subscriptions</span>
<span class="t" style="left:43px;top:533.2px;font-size:13px;line-height:20px;color:#2b5cf0;letter-spacing:0.385px;">Billing</span>
<span class="t" style="left:43px;top:564.5px;font-size:13px;line-height:20px;color:#1f273b;letter-spacing:0.373px;">Terms and policies</span>
<span class="t" style="left:43px;top:595.8px;font-size:13px;line-height:20px;color:#1f273b;letter-spacing:0.533px;">Activity log</span>
<span class="t" style="left:43px;top:627.1px;font-size:13px;line-height:20px;color:#1f273b;letter-spacing:0.359px;">Customize data</span>
<span class="t" style="left:43px;top:658.4px;font-size:13px;line-height:20px;color:#1f273b;letter-spacing:0.375px;">Gift cards</span>
<span class="t" style="left:43px;top:689.8px;font-size:13px;line-height:20px;color:#1f273b;letter-spacing:0.324px;">Brand</span>
<span class="t" style="left:43px;top:721.1px;font-size:13px;line-height:20px;color:#1f273b;letter-spacing:0.461px;">Markets</span>
<span class="t" style="left:336px;top:131.2px;font-size:20px;line-height:30px;color:#14192a;letter-spacing:0.607px;">Billing</span>
<span class="t" style="left:1406px;top:135.6px;font-size:13px;line-height:20px;color:#14192a;letter-spacing:0.392px;">Export bill</span>
<span class="t" style="left:336px;top:175.9px;font-size:16px;line-height:24px;color:#14192a;letter-spacing:0.543px;">Billing/Payment information</span>
<span class="t" style="left:336px;top:198.3px;font-size:13px;line-height:20px;color:#58648a;letter-spacing:0.105px;">Manage your payment methods and billing address in SHOPLINE</span>
<span class="t" style="left:352px;top:245.7px;font-size:13px;line-height:20px;color:#14192a;letter-spacing:0.347px;-webkit-text-stroke-width:0.38px;">Currently linked cards</span>
<span class="t" style="left:352px;top:266.2px;font-size:13px;line-height:20px;color:#58648a;letter-spacing:0.225px;">Linking a bank card for automatic renewal will only initiate deductions from your bank card when relevant charges are incurred.</span>
<span class="t" style="left:379.5px;top:283.3px;font-size:13px;line-height:20px;color:#2b5cf0;letter-spacing:0.373px;">Learn more about automatic billing deduction</span>
<span class="t" style="left:676px;top:340.0px;font-size:15px;line-height:22px;color:#14192a;">+</span>
<span class="t" style="left:694px;top:341.5px;font-size:13px;line-height:20px;color:#14192a;letter-spacing:0.308px;">Add a bank card</span>
<span class="t" style="left:564px;top:390.0px;font-size:12px;line-height:18px;color:#8f97ae;letter-spacing:0.311px;">Currently supported bank card types</span>
<span class="t" style="left:1163px;top:246.0px;font-size:13px;line-height:20px;color:#14192a;letter-spacing:0.318px;-webkit-text-stroke-width:0.38px;">Billing address</span>
<span class="t" style="left:1163px;top:263.5px;font-size:13px;line-height:20px;color:#58648a;letter-spacing:0.221px;">Enter your company’s registered address or your</span>
<span class="t" style="left:1163px;top:279.5px;font-size:13px;line-height:20px;color:#58648a;letter-spacing:0.201px;">primary residence. This determines the taxes applied to</span>
<span class="t" style="left:1163px;top:295.5px;font-size:13px;line-height:20px;color:#58648a;letter-spacing:0.175px;">your bill.</span>
<span class="t" style="left:1163px;top:394.5px;font-size:12px;line-height:18px;color:#3a4460;letter-spacing:0.281px;">To edit your billing address, go to</span>
<span class="t" style="left:1356px;top:394.5px;font-size:12px;line-height:18px;color:#2b5cf0;letter-spacing:0.381px;">Basic settings</span>
<span class="t" style="left:336px;top:461.2px;font-size:16px;line-height:24px;color:#14192a;letter-spacing:0.582px;">Bill list</span>
<span class="t" style="left:336px;top:484.2px;font-size:13px;line-height:20px;color:#58648a;letter-spacing:0.201px;">Includes all billing details under this store, such as the plan subscription bills, app subscription bills, commission bills, etc.</span>
<span class="t" style="left:360px;top:536.0px;font-size:16px;line-height:24px;color:#14192a;letter-spacing:0.483px;">Billing list</span>
<span class="t" style="left:456px;top:536.0px;font-size:16px;line-height:24px;color:#46517a;letter-spacing:0.425px;">Transaction Fee flow</span>
<span class="t" style="left:372px;top:589.0px;font-size:14px;line-height:21px;color:#8c95ad;letter-spacing:0.288px;">By billing number</span>
<span class="t" style="left:697px;top:589.5px;font-size:13px;line-height:20px;color:#14192a;letter-spacing:0.434px;">Bill type</span>
<span class="t" style="left:827px;top:589.5px;font-size:13px;line-height:20px;color:#14192a;letter-spacing:0.236px;">Bill status</span>
<span class="t" style="left:955px;top:590.0px;font-size:13px;line-height:20px;color:#14192a;letter-spacing:0.292px;">Start date</span>
<span class="t" style="left:1096px;top:590.0px;font-size:13px;line-height:20px;color:#14192a;letter-spacing:0.136px;">End date</span>
<span class="t" style="left:412px;top:636.5px;font-size:13px;line-height:20px;color:#14192a;letter-spacing:0.279px;-webkit-text-stroke-width:0.38px;">Billing number</span>
<span class="t" style="left:602px;top:636.5px;font-size:13px;line-height:20px;color:#14192a;letter-spacing:0.434px;-webkit-text-stroke-width:0.38px;">Bill type</span>
<span class="t" style="left:783px;top:636.5px;font-size:13px;line-height:20px;color:#14192a;letter-spacing:0.234px;-webkit-text-stroke-width:0.38px;">Item</span>
<span class="t" style="left:987px;top:636.5px;font-size:13px;line-height:20px;color:#14192a;letter-spacing:0.260px;-webkit-text-stroke-width:0.38px;">Date generated</span>
<span class="t" style="left:1168px;top:636.5px;font-size:13px;line-height:20px;color:#14192a;letter-spacing:0.378px;-webkit-text-stroke-width:0.38px;">Total bill amount</span>
<span class="t" style="left:1348px;top:636.5px;font-size:13px;line-height:20px;color:#14192a;letter-spacing:0.428px;-webkit-text-stroke-width:0.38px;">Status</span>
<span class="t" style="left:602px;top:680.5px;font-size:13px;line-height:20px;color:#3a4460;letter-spacing:0.439px;">Application</span>
<span class="t" style="left:783px;top:680.5px;font-size:13px;line-height:20px;color:#3a4460;letter-spacing:0.358px;">Member System-Lite</span>
<span class="t" style="left:987px;top:680.5px;font-size:13px;line-height:20px;color:#3a4460;letter-spacing:0.037px;">2025/11/02 15:00:12</span>
<span class="t" style="left:1168px;top:680.5px;font-size:13px;line-height:20px;color:#3a4460;">$</span>
<span class="t" style="left:1364.4px;top:681.8px;font-size:12.5px;line-height:19px;color:#3a4460;letter-spacing:-0.344px;">Paid</span>
<span class="t" style="left:602px;top:729.5px;font-size:13px;line-height:20px;color:#3a4460;letter-spacing:0.439px;">Application</span>
<span class="t" style="left:783px;top:729.5px;font-size:13px;line-height:20px;color:#3a4460;letter-spacing:0.358px;">Member System-Lite</span>
<span class="t" style="left:987px;top:729.5px;font-size:13px;line-height:20px;color:#3a4460;letter-spacing:0.151px;">2025/10/02 14:00:13</span>
<span class="t" style="left:1168px;top:729.5px;font-size:13px;line-height:20px;color:#3a4460;">$</span>
<span class="t" style="left:1364.4px;top:730.8px;font-size:12.5px;line-height:19px;color:#3a4460;letter-spacing:-0.344px;">Paid</span>
<span class="t" style="left:602px;top:778.5px;font-size:13px;line-height:20px;color:#3a4460;letter-spacing:0.439px;">Application</span>
<span class="t" style="left:783px;top:778.5px;font-size:13px;line-height:20px;color:#3a4460;letter-spacing:0.171px;">Instagram Feed-Pro Plan</span>
<span class="t" style="left:987px;top:778.5px;font-size:13px;line-height:20px;color:#3a4460;letter-spacing:0.318px;">2025/09/22 17:59:52</span>
<span class="t" style="left:1168px;top:778.5px;font-size:13px;line-height:20px;color:#3a4460;">$</span>
<span class="t" style="left:1364.4px;top:779.8px;font-size:12.5px;line-height:19px;color:#3a4460;letter-spacing:-0.344px;">Paid</span>
<span class="t" style="left:602px;top:827.5px;font-size:13px;line-height:20px;color:#3a4460;letter-spacing:0.439px;">Application</span>
<span class="t" style="left:783px;top:827.5px;font-size:13px;line-height:20px;color:#3a4460;letter-spacing:0.142px;">Instagram Feed-Free Plan</span>
<span class="t" style="left:987px;top:827.5px;font-size:13px;line-height:20px;color:#3a4460;letter-spacing:0.262px;">2025/09/19 12:09:53</span>
<span class="t" style="left:1168px;top:827.5px;font-size:13px;line-height:20px;color:#3a4460;">$</span>
<span class="t" style="left:1364.4px;top:828.8px;font-size:12.5px;line-height:19px;color:#3a4460;letter-spacing:-0.344px;">Paid</span>
</div>
</div>
</body>
</html>
